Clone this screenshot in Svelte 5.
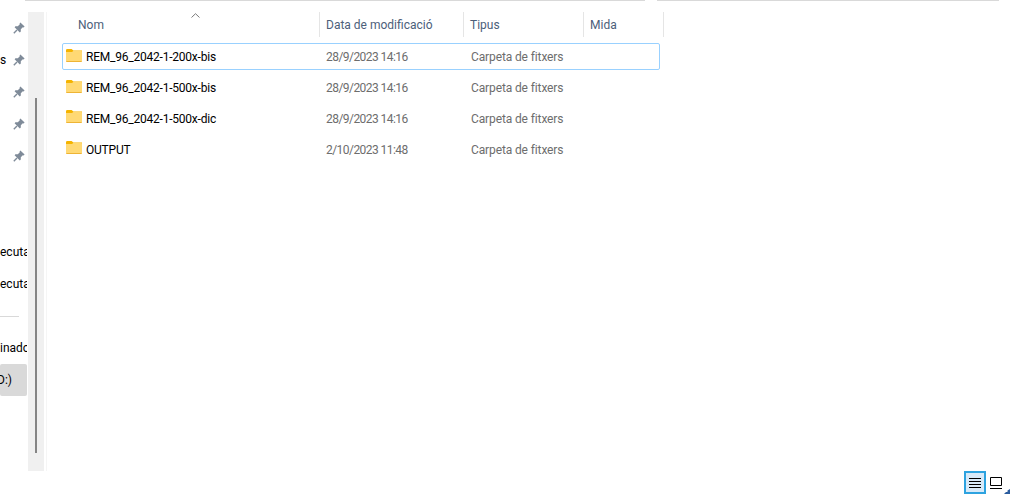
<script>
    const pinned = ["", "s", "", "", "", "", "", "ecuta", "ecuta"];
    const columns = [
        { name: "Nom", width: 258 },
        { name: "Data de modificació", width: 144 },
        { name: "Tipus", width: 120 },
        { name: "Mida", width: 80 },
    ];
    const files = [
        { name: "REM_96_2042-1-200x-bis", date: "28/9/2023 14:16", selected: true },
        { name: "REM_96_2042-1-500x-bis", date: "28/9/2023 14:16" },
        { name: "REM_96_2042-1-500x-dic", date: "28/9/2023 14:16" },
        { name: "OUTPUT", date: "2/10/2023 11:48" },
    ];
</script>

<div class="window">
    <div class="topline">
        <span class="line-a"></span>
        <span class="line-b"></span>
    </div>

    <div class="content">
        <nav class="sidebar">
            <ul class="tree">
                {#each pinned as label, i}
                    <li class="tree-row">
                        <span class="tree-label">{label}</span>
                        {#if i < 5}
                            <svg class="pin" width="12" height="12" viewBox="0 0 12 12">
                                <path d="M7.4 0.4 11.6 4.6 10.6 5.4 9.8 5.2 7.8 7.2 7.8 9.6 6.8 10.4 1.6 5.2 2.4 4.2 4.8 4.2 6.8 2.2 6.6 1.4Z" fill="#7f8b99" />
                                <path d="M4 8 0.8 11.2" stroke="#7f8b99" stroke-width="1.4" />
                            </svg>
                        {/if}
                    </li>
                {/each}
                <li class="tree-sep"><hr /></li>
                <li class="tree-row"><span class="tree-label">inado</span></li>
                <li class="tree-row current"><span class="tree-label">D:)</span></li>
            </ul>
            <div class="scrolltrack"><div class="scrollthumb"></div></div>
        </nav>

        <main class="list">
            <div class="chevron-row">
                <svg width="9" height="5" viewBox="0 0 9 5"><path d="M0.5 4.5 4.5 0.7 8.5 4.5" fill="none" stroke="#7a7a7a" /></svg>
            </div>
            <div class="header">
                {#each columns as col}
                    <div class="col" style="width: {col.width}px">{col.name}</div>
                {/each}
            </div>
            <div class="rows">
                {#each files as file}
                    <div class="row" class:selected={file.selected}>
                        <div class="cell-name">
                            <svg class="folder" width="16" height="13" viewBox="0 0 16 13">
                                <path d="M0 1.2Q0 0 1.2 0H5.6L7.4 1.6H16V4H0Z" fill="#f5b400" />
                                <path d="M0 3H6L7.6 1.8H14.8Q16 1.8 16 3V11.8Q16 13 14.8 13H1.2Q0 13 0 11.8Z" fill="#ffd974" />
                                <path d="M0 12H16V11.8Q16 13 14.8 13H1.2Q0 13 0 11.8Z" fill="#eeb435" />
                            </svg>
                            <span class="name-text">{file.name}</span>
                        </div>
                        <div class="cell-date">{file.date}</div>
                        <div class="cell-type">Carpeta de fitxers</div>
                    </div>
                {/each}
            </div>
        </main>
    </div>

    <div class="viewbtns">
        <button class="viewbtn active" aria-label="Detalls">
            <svg width="12" height="12" viewBox="0 0 12 12"><path d="M0 1.5H12M0 4.5H12M0 7.5H12M0 10.5H12" stroke="#000" /></svg>
        </button>
        <button class="viewbtn small" aria-label="Icones grans">
            <svg width="12" height="12" viewBox="0 0 12 12"><path d="M0.5 0.5H11.5V8.5H0.5Z" fill="none" stroke="#000" /><path d="M0 11.5H12" stroke="#000" /></svg>
        </button>
        <svg class="grip" width="6" height="5" viewBox="0 0 6 5"><path d="M6 0V5H0L2 3H3.5V1.5Z" fill="#2b5c9e" /></svg>
    </div>
</div>

<style>
    :global(body) {
        background: #fff;
    }

    .window {
        position: relative;
        width: 1010px;
        height: 494px;
        overflow: hidden;
        display: flex;
        flex-direction: column;
        font-family: Roboto, "Liberation Sans", sans-serif;
        font-size: 12px;
        background: #fff;
    }

    .topline {
        height: 12px;
        display: flex;
        padding-left: 25px;
    }

    .topline span {
        height: 1px;
        background: #d9d9d9;
    }

    .line-a {
        width: 620px;
        margin-right: 12px;
    }

    .line-b {
        width: 342px;
    }

    .content {
        height: 459px;
        display: flex;
    }

    .sidebar {
        width: 47px;
        flex: none;
        display: flex;
        border-right: 1px solid #f5f5f5;
        box-sizing: border-box;
    }

    .tree {
        width: 28px;
        flex: none;
        margin: 0;
        padding: 0;
        list-style: none;
        overflow: hidden;
    }

    .tree-row {
        height: 32px;
        display: flex;
        align-items: center;
        position: relative;
        margin-right: 1px;
        border-radius: 2px;
        color: #000;
        white-space: nowrap;
        overflow: hidden;
    }

    .tree-label {
        flex: none;
    }

    .pin {
        position: absolute;
        left: 13px;
        top: 10px;
    }

    .current {
        background: #d9d9d9;
    }

    .current .tree-label {
        margin-left: -3px;
    }

    .tree-sep {
        height: 32px;
        display: flex;
        align-items: center;
    }

    .tree-sep hr {
        width: 19px;
        margin: 0;
        border: none;
        border-top: 1px solid #d9d9d9;
    }

    .scrolltrack {
        width: 16px;
        flex: none;
        background: #f0f0f0;
        padding-top: 86px;
        display: flex;
        justify-content: center;
        box-sizing: border-box;
    }

    .scrollthumb {
        width: 2px;
        height: 355px;
        margin-left: -1px;
        background: #858585;
    }

    .list {
        flex: 1;
        min-width: 0;
    }

    .chevron-row {
        height: 0;
        padding-left: 144px;
        position: relative;
        top: 1px;
    }

    .chevron-row svg {
        display: block;
    }

    .header {
        height: 25px;
        display: flex;
        margin-left: 15px;
    }

    .col {
        box-sizing: border-box;
        padding-left: 16px;
        line-height: 27px;
        color: #4c607a;
        border-right: 1px solid #e5e5e5;
    }

    .col + .col {
        padding-left: 6px;
    }

    .rows {
        margin: 6px 0 0 15px;
        width: 598px;
        display: flex;
        flex-direction: column;
        gap: 4px;
    }

    .row {
        height: 26.75px;
        box-sizing: border-box;
        display: flex;
        align-items: center;
        border: 1px solid transparent;
        border-radius: 2px;
        color: #6d6d6d;
    }

    .selected {
        border-color: #99d1ff;
    }

    .cell-name {
        width: 263px;
        padding-left: 3px;
        box-sizing: border-box;
        display: flex;
        align-items: center;
        gap: 4px;
        color: #000;
    }

    .name-text {
        letter-spacing: -0.22px;
        padding-top: 2px;
    }

    .folder {
        flex: none;
        margin-top: -2px;
    }

    .cell-date {
        width: 145px;
        letter-spacing: -0.55px;
        padding-top: 2px;
    }

    .cell-type {
        letter-spacing: -0.12px;
        padding-top: 2px;
    }

    .viewbtns {
        display: flex;
        justify-content: flex-end;
        gap: 1px;
        padding-right: 5px;
    }

    .viewbtn {
        width: 22px;
        height: 23px;
        padding: 0;
        box-sizing: border-box;
        display: flex;
        align-items: center;
        justify-content: center;
        background: #fff;
        border: none;
    }

    .active {
        background: #d8eaf9;
        border: 2px solid #2ea3e0;
    }

    .small {
        width: 18px;
    }

    .grip {
        position: absolute;
        right: 0;
        bottom: 0;
    }
</style>
